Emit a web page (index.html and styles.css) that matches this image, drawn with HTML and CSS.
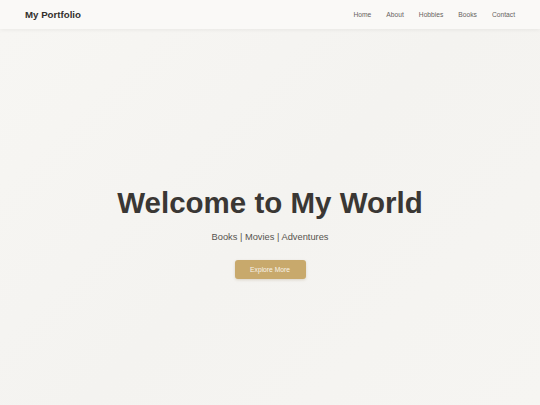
FILE: index.html
```html
<!DOCTYPE html>
<html lang="en">
<head>
<meta charset="utf-8">
<title>My Portfolio</title>
<link rel="stylesheet" href="styles.css">
</head>
<body>
<header class="site-header">
  <div class="logo">My Portfolio</div>
  <nav class="nav">
    <a href="#">Home</a>
    <a href="#">About</a>
    <a href="#">Hobbies</a>
    <a href="#">Books</a>
    <a href="#">Contact</a>
  </nav>
</header>
<main class="hero">
  <h1 class="hero-title">Welcome to My World</h1>
  <p class="hero-sub">Books | Movies | Adventures</p>
  <a class="btn" href="#">Explore More</a>
</main>
</body>
</html>
```

FILE: styles.css
```css
* { box-sizing: border-box; }
html, body { margin: 0; padding: 0; }
body {
  font-family: "Liberation Sans", Arial, sans-serif;
  background: #f5f4f1;
  height: 405px;
  overflow: hidden;
}
.site-header {
  height: 29px;
  padding: 0 25px;
  display: flex;
  align-items: center;
  justify-content: space-between;
  background: #faf9f7;
  box-shadow: 0 1px 4px rgba(0,0,0,0.06);
  position: relative;
  z-index: 1;
}
.logo {
  font-size: 9.7px;
  font-weight: 700;
  color: #33302d;
}
.nav {
  display: flex;
  gap: 15px;
}
.nav a {
  font-size: 6.7px;
  color: #66625e;
  text-decoration: none;
}
.hero {
  height: 376px;
  display: flex;
  flex-direction: column;
  align-items: center;
  padding-top: 157px;
  background: linear-gradient(135deg, #f7f6f3 0%, #f4f3f0 50%, #f6f5f2 100%);
}
.hero-title {
  margin: 0;
  font-size: 29.5px;
  line-height: 34px;
  font-weight: 700;
  color: #3a3734;
}
.hero-sub {
  margin: 11px 0 0;
  font-size: 9.3px;
  line-height: 12px;
  color: #57534f;
}
.btn {
  margin-top: 17px;
  width: 71px;
  height: 19px;
  display: flex;
  align-items: center;
  justify-content: center;
  background: #c8a96c;
  color: #f8f3ea;
  font-size: 6.7px;
  text-decoration: none;
  border-radius: 3px;
  box-shadow: 0 1px 3px rgba(120,90,40,0.2);
}
```
